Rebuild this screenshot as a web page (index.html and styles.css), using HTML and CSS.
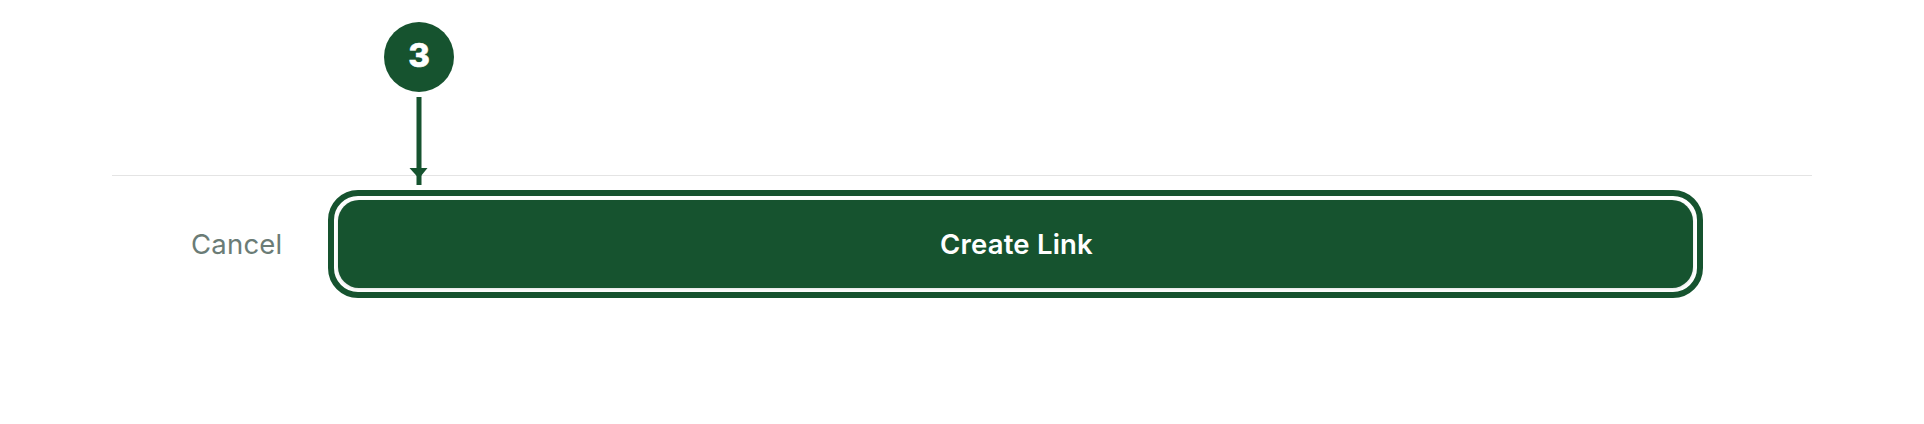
FILE: index.html
```html
<!DOCTYPE html>
<html lang="en">
<head>
<meta charset="utf-8">
<title>Create Link</title>
<link rel="stylesheet" href="styles.css">
</head>
<body>
<div class="page">
  <div class="top"></div>
  <div class="footer">
    <div class="cancel-col"><span class="cancel">Cancel</span></div>
    <div class="ring">
      <button class="primary">Create Link</button>
    </div>
  </div>
  <div class="annot">
    <div class="badge">3</div>
    <svg class="arrow" width="70" height="165" viewBox="0 0 70 165">
      <rect x="32.5" y="75" width="5" height="88" fill="#16532f"/>
      <polygon points="25.5,146 43.5,146 35,156.5" fill="#16532f"/>
    </svg>
  </div>
</div>
</body>
</html>
```

FILE: styles.css
```css
html, body {
  margin: 0;
  padding: 0;
  background: #ffffff;
}
body {
  width: 1924px;
  height: 424px;
  overflow: hidden;
  font-family: Inter, "Noto Sans", "Liberation Sans", sans-serif;
}
.page {
  position: relative;
  margin-left: 112px;
  width: 1700px;
}
.top {
  height: 175px;
}
.footer {
  border-top: 1px solid #e4e4e4;
  padding-top: 14px;
  display: grid;
  grid-template-columns: 216px 1375px;
  align-items: center;
}
.cancel-col {
  padding-left: 79px;
}
.cancel {
  font-size: 27.5px;
  color: #6b7c76;
  letter-spacing: 0.2px;
}
.ring {
  border: 6px solid #16532f;
  border-radius: 30px;
  padding: 4px;
  display: flex;
}
.primary {
  flex: 1;
  height: 88px;
  border: 0;
  border-radius: 21px;
  background: #16532f;
  color: #ffffff;
  font-family: Inter, "Noto Sans", "Liberation Sans", sans-serif;
  font-size: 27.5px;
  font-weight: 600;
  letter-spacing: 0.2px;
  box-shadow: 0 1px 3px rgba(0, 0, 0, 0.12);
  padding: 0 0 0 2px;
}
.annot {
  position: absolute;
  left: 272px;
  top: 22px;
  width: 70px;
}
.badge {
  width: 70px;
  height: 70px;
  border-radius: 50%;
  background: #16532f;
  color: #ffffff;
  font-size: 33px;
  font-weight: 800;
  -webkit-text-stroke: 0.5px #ffffff;
  display: flex;
  align-items: center;
  justify-content: center;
  padding-bottom: 4px;
  box-sizing: border-box;
  line-height: 1;
}
.arrow {
  position: absolute;
  left: 0;
  top: 0;
}
```
